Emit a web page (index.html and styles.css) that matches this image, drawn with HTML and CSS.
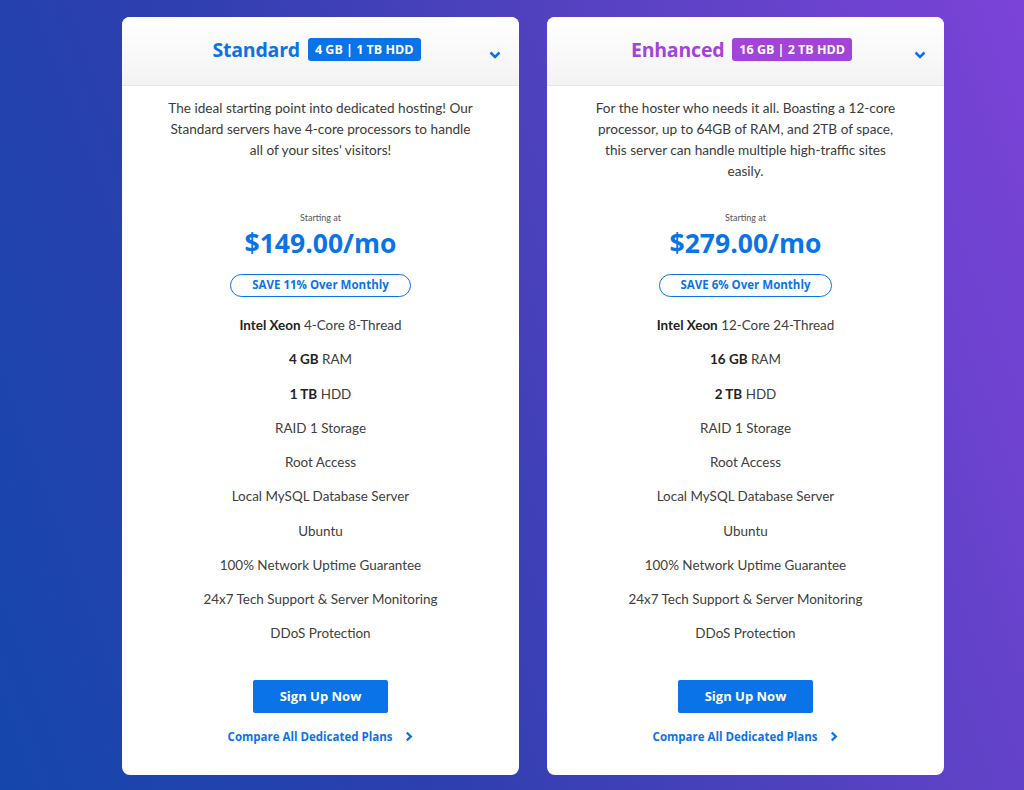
FILE: index.html
```html
<!DOCTYPE html>
<html lang="en">
<head>
<meta charset="utf-8">
<title>Dedicated Plans</title>
<link rel="stylesheet" href="styles.css">
</head>
<body>
<main class="plans">
  <section class="card">
    <header class="card-head">
      <h2 class="plan-name blue">Standard</h2>
      <span class="plan-tag bg-blue">4 GB | 1 TB HDD</span>
      <svg class="toggle" width="12" height="8" viewBox="0 0 12 8"><path d="M1.5 1.5 6 6 10.5 1.5" fill="none" stroke="#0a73e8" stroke-width="2.6"/></svg>
    </header>
    <div class="card-body">
      <p class="desc">The ideal starting point into dedicated hosting! Our Standard servers have 4-core processors to handle all of your sites' visitors!</p>
      <div class="starting">Starting at</div>
      <div class="price">$149.00/mo</div>
      <div class="save">SAVE 11% Over Monthly</div>
      <ul class="features">
        <li><b>Intel Xeon</b> 4-Core 8-Thread</li>
        <li><b>4 GB</b> RAM</li>
        <li><b>1 TB</b> HDD</li>
        <li>RAID 1 Storage</li>
        <li>Root Access</li>
        <li>Local MySQL Database Server</li>
        <li>Ubuntu</li>
        <li>100% Network Uptime Guarantee</li>
        <li>24x7 Tech Support &amp; Server Monitoring</li>
        <li>DDoS Protection</li>
      </ul>
      <a class="signup" href="#">Sign Up Now</a>
      <a class="compare" href="#">Compare All Dedicated Plans <svg width="8" height="11" viewBox="0 0 8 11"><path d="M1.8 1.5 5.8 5.5 1.8 9.5" fill="none" stroke="#0a73e8" stroke-width="2.4"/></svg></a>
    </div>
  </section>
  <section class="card">
    <header class="card-head">
      <h2 class="plan-name purple">Enhanced</h2>
      <span class="plan-tag bg-purple">16 GB | 2 TB HDD</span>
      <svg class="toggle" width="12" height="8" viewBox="0 0 12 8"><path d="M1.5 1.5 6 6 10.5 1.5" fill="none" stroke="#0a73e8" stroke-width="2.6"/></svg>
    </header>
    <div class="card-body">
      <p class="desc">For the hoster who needs it all. Boasting a 12-core processor, up to 64GB of RAM, and 2TB of space, this server can handle multiple high-traffic sites easily.</p>
      <div class="starting">Starting at</div>
      <div class="price">$279.00/mo</div>
      <div class="save">SAVE 6% Over Monthly</div>
      <ul class="features">
        <li><b>Intel Xeon</b> 12-Core 24-Thread</li>
        <li><b>16 GB</b> RAM</li>
        <li><b>2 TB</b> HDD</li>
        <li>RAID 1 Storage</li>
        <li>Root Access</li>
        <li>Local MySQL Database Server</li>
        <li>Ubuntu</li>
        <li>100% Network Uptime Guarantee</li>
        <li>24x7 Tech Support &amp; Server Monitoring</li>
        <li>DDoS Protection</li>
      </ul>
      <a class="signup" href="#">Sign Up Now</a>
      <a class="compare" href="#">Compare All Dedicated Plans <svg width="8" height="11" viewBox="0 0 8 11"><path d="M1.8 1.5 5.8 5.5 1.8 9.5" fill="none" stroke="#0a73e8" stroke-width="2.4"/></svg></a>
    </div>
  </section>
</main>
</body>
</html>
```

FILE: styles.css
```css
* { box-sizing: border-box; }
html, body { margin: 0; height: 100%; }
body {
  background: linear-gradient(70deg, #1446ab 0%, #2f3faf 35%, #5a42c4 70%, #7c43d8 100%);
  font-family: Lato, "Open Sans", sans-serif;
  color: #333;
  overflow: hidden;
}
.plans {
  display: flex;
  gap: 28px;
  padding: 17px 0 0 122px;
}
.card {
  width: 397px;
  height: 758px;
  background: #fff;
  border-radius: 8px;
  overflow: hidden;
  display: flex;
  flex-direction: column;
}
.card-head {
  height: 69px;
  background: linear-gradient(#ffffff, #f3f3f3);
  border-bottom: 1px solid #e6e6e6;
  display: flex;
  align-items: center;
  justify-content: center;
  gap: 8px;
  position: relative;
  padding: 0 8px 3px 0;
}
.plan-name {
  margin: 0;
  font-family: "Open Sans", sans-serif;
  font-weight: 700;
  font-size: 19.5px;
  letter-spacing: -0.2px;
}
.blue { color: #0a73e8; }
.purple { color: #a244d8; }
.plan-tag {
  color: #fff;
  font-family: "Open Sans", sans-serif;
  font-weight: 700;
  font-size: 12.5px;
  line-height: 23px;
  height: 23px;
  padding: 0 7px;
  border-radius: 3px;
}
.bg-blue { background: #0a73e8; }
.bg-purple { background: #a244d8; }
.toggle {
  position: absolute;
  right: 18px;
  top: 34px;
}
.card-body {
  display: flex;
  flex-direction: column;
  align-items: center;
  padding: 12px 0 0;
}
.desc {
  margin: 0;
  width: 314px;
  height: 92px;
  font-size: 13.6px;
  line-height: 21px;
  text-align: center;
  color: #3b3b3b;
}
.starting {
  margin-top: 22px;
  font-size: 9px;
  line-height: 12px;
  color: #555;
}
.price {
  margin-top: 3px;
  font-family: "Open Sans", sans-serif;
  font-weight: 700;
  font-size: 26.5px;
  line-height: 32px;
  color: #0a73e8;
}
.save {
  margin-top: 15px;
  height: 23px;
  line-height: 20px;
  padding: 0 21px;
  border: 1.5px solid #0a73e8;
  border-radius: 12px;
  font-family: "Open Sans", sans-serif;
  font-weight: 700;
  font-size: 11.5px;
  color: #0a73e8;
}
.features {
  list-style: none;
  margin: 11px 0 0;
  padding: 0;
  text-align: center;
}
.features li {
  height: 34.25px;
  line-height: 34px;
  font-size: 13.45px;
  color: #404040;
}
.features b { color: #222; font-weight: 700; }
.signup {
  margin-top: 29px;
  width: 135px;
  height: 33px;
  line-height: 33px;
  text-align: center;
  background: #0a73e8;
  border-radius: 2px;
  color: #fff;
  text-decoration: none;
  font-family: "Open Sans", sans-serif;
  font-weight: 700;
  font-size: 13px;
}
.compare {
  margin-top: 16px;
  display: flex;
  align-items: center;
  gap: 13px;
  color: #0a73e8;
  text-decoration: none;
  font-family: "Open Sans", sans-serif;
  font-weight: 700;
  font-size: 11.5px;
  line-height: 16px;
}
```
